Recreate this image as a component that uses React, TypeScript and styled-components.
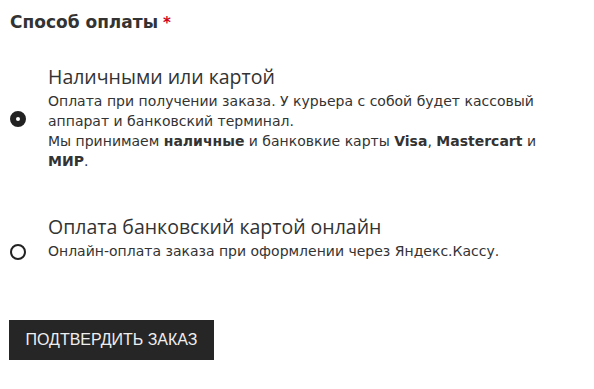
import styled, { createGlobalStyle } from "styled-components";

const GlobalStyle = createGlobalStyle`
  body {
    margin: 0;
    background: #fff;
    font-family: "DejaVu Sans", Verdana, sans-serif;
    color: #333;
  }
`;

const paymentOptions = [
  {
    id: "cash",
    title: "Наличными или картой",
    checked: true,
    minHeight: 112,
    description: (
      <>
        Оплата при получении заказа. У курьера с собой будет кассовый аппарат и банковский терминал.
        <br />
        Мы принимаем <b>наличные</b> и банковкие карты <b>Visa</b>, <b>Mastercart</b> и <b>МИР</b>.
      </>
    ),
  },
  {
    id: "online",
    title: "Оплата банковский картой онлайн",
    checked: false,
    minHeight: 78,
    description: <>Онлайн-оплата заказа при оформлении через Яндекс.Кассу.</>,
  },
];

const App = () => {
  return (
    <>
      <GlobalStyle />
      <PaymentForm>
        <FormTitle>
          Способ оплаты<Required>*</Required>
        </FormTitle>

        <OptionList>
          {paymentOptions.map((option) => (
            <Option key={option.id} $minHeight={option.minHeight}>
              <Radio $checked={option.checked} />
              <OptionText>
                <OptionTitle>{option.title}</OptionTitle>
                <OptionDescription>{option.description}</OptionDescription>
              </OptionText>
            </Option>
          ))}
        </OptionList>

        <SubmitButton type="button">Подтвердить заказ</SubmitButton>
      </PaymentForm>
    </>
  );
};

export default App;

const PaymentForm = styled.div`
  width: 594px;
  height: 389px;
  padding: 10px 10px 0;
  box-sizing: border-box;
`;

const FormTitle = styled.h2`
  margin: 0;
  font-size: 17px;
  font-weight: bold;
  line-height: 24px;
  color: #333;
`;

const Required = styled.span`
  color: #d0021b;
  font-size: 15px;
  margin-left: 5px;
`;

const OptionList = styled.div`
  display: flex;
  flex-direction: column;
  margin-top: 28px;
  gap: 38px;
`;

const Option = styled.label<{ $minHeight: number }>`
  display: flex;
  align-items: center;
  gap: 22px;
  min-height: ${(p) => p.$minHeight}px;
  cursor: pointer;
`;

const Radio = styled.span<{ $checked: boolean }>`
  flex: none;
  width: 16px;
  height: 16px;
  box-sizing: border-box;
  border-radius: 50%;
  border: 2px solid #222;
  background: ${(p) => (p.$checked ? "#222" : "#fff")};
  display: flex;
  align-items: center;
  justify-content: center;

  &::after {
    content: "";
    width: 4px;
    height: 4px;
    border-radius: 50%;
    background: #fff;
    display: ${(p) => (p.$checked ? "block" : "none")};
  }
`;

const OptionText = styled.div`
  display: flex;
  flex-direction: column;
  align-self: flex-start;
`;

const OptionTitle = styled.div`
  font-family: "Open Sans", sans-serif;
  font-size: 19.5px;
  font-weight: 400;
  line-height: 28px;
  color: #333;
`;

const OptionDescription = styled.div`
  font-size: 14px;
  line-height: 20px;
  color: #333;
  max-width: 495px;

  b {
    font-weight: bold;
  }
`;

const SubmitButton = styled.button`
  margin-top: 29px;
  margin-left: -1px;
  width: 205px;
  height: 40px;
  border: none;
  background: #262626;
  color: #eee;
  font-family: "Liberation Sans", Arial, sans-serif;
  font-size: 16px;
  text-transform: uppercase;
  cursor: pointer;
`;
